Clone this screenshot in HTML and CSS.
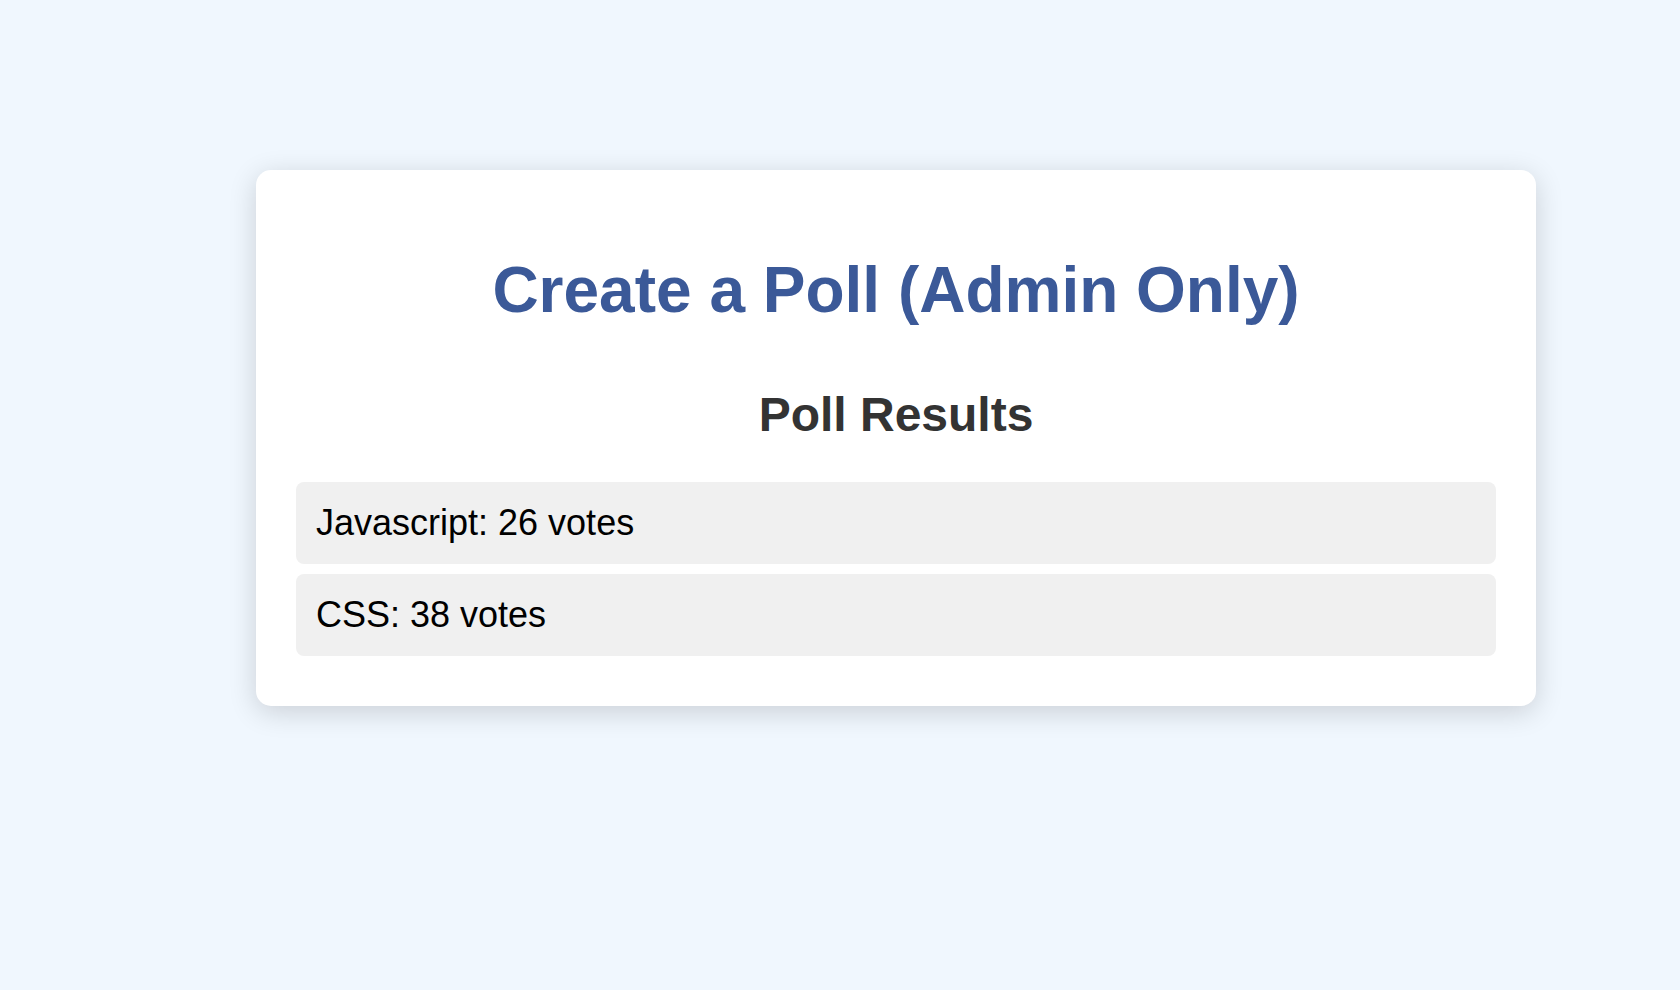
FILE: index.html
```html
<!DOCTYPE html>
<html lang="en">
<head>
<meta charset="utf-8">
<title>Create a Poll</title>
<link rel="stylesheet" href="styles.css">
</head>
<body>
<main class="page">
  <section class="card">
    <h1 class="title">Create a Poll (Admin Only)</h1>
    <h2 class="subtitle">Poll Results</h2>
    <ul class="results">
      <li class="result">Javascript: 26 votes</li>
      <li class="result">CSS: 38 votes</li>
    </ul>
  </section>
</main>
</body>
</html>
```

FILE: styles.css
```css
html, body {
  margin: 0;
  padding: 0;
}

body {
  background: #f0f7fe;
  font-family: "Liberation Sans", Arial, Helvetica, sans-serif;
  min-height: 990px;
}

.page {
  padding: 170px 0 0 256px;
}

.card {
  width: 1280px;
  box-sizing: border-box;
  background: #ffffff;
  border-radius: 15px;
  padding: 40px;
  box-shadow: 0 6px 28px rgba(0, 0, 0, 0.16);
}

.title {
  margin: 43px 0 60px;
  text-align: center;
  font-size: 64px;
  font-weight: bold;
  color: #3b5998;
}

.subtitle {
  margin: 60px 0 40px;
  text-align: center;
  font-size: 48px;
  font-weight: bold;
  color: #333333;
}

.results {
  list-style: none;
  margin: 0;
  padding: 0;
}

.result {
  background: #f0f0f0;
  border-radius: 8px;
  padding: 20px;
  margin-bottom: 10px;
  font-size: 36px;
  color: #000000;
}
```
